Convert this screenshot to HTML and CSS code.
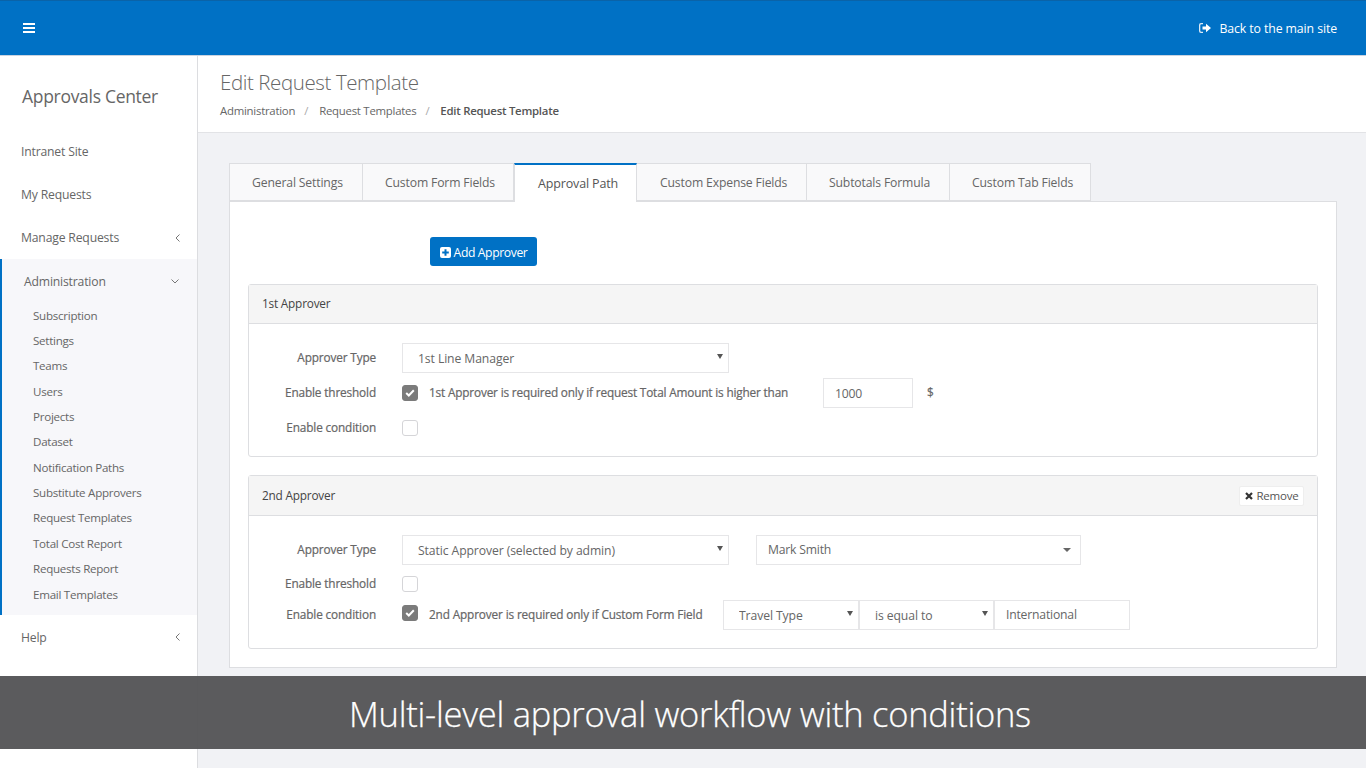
FILE: index.html
```html
<!DOCTYPE html>
<html lang="en">
<head>
<meta charset="utf-8">
<title>Edit Request Template</title>
<link rel="stylesheet" href="styles.css">
</head>
<body>
<header class="topbar">
  <svg class="burger" width="12" height="10" viewBox="0 0 12 10"><path d="M0 0h12v2H0zM0 4h12v2H0zM0 8h12v2H0z" fill="#fff"/></svg>
  <a class="back"><svg width="12" height="10" viewBox="0 0 12 10"><path d="M4 0H2a2 2 0 0 0-2 2v6a2 2 0 0 0 2 2h2V8.700H2.300A1 1 0 0 1 1.300 7.700V2.300a1 1 0 0 1 1-1H4z" fill="#dce9f5"/><path d="M3.500 3.500H7V.8L12 5 7 9.200V6.500H3.500z" fill="#fff"/></svg><span>Back to the main site</span></a>
</header>
<div class="layout">
  <aside class="sidebar">
    <div class="brand">Approvals Center</div>
    <nav>
      <div class="nav-item">Intranet Site</div>
      <div class="nav-item">My Requests</div>
      <div class="nav-item">Manage Requests<svg class="chev" width="5" height="8" viewBox="0 0 5 8"><path d="M4.500.5 1 4l3.500 3.500" fill="none" stroke="#777" stroke-width="1"/></svg></div>
      <div class="nav-group">
        <div class="nav-item group-head">Administration<svg class="chev down" width="8" height="5" viewBox="0 0 8 5"><path d="M.5.500 4 4 7.500.5" fill="none" stroke="#777" stroke-width="1"/></svg></div>
        <div class="sub">Subscription</div>
        <div class="sub">Settings</div>
        <div class="sub">Teams</div>
        <div class="sub">Users</div>
        <div class="sub">Projects</div>
        <div class="sub">Dataset</div>
        <div class="sub">Notification Paths</div>
        <div class="sub">Substitute Approvers</div>
        <div class="sub">Request Templates</div>
        <div class="sub">Total Cost Report</div>
        <div class="sub">Requests Report</div>
        <div class="sub">Email Templates</div>
      </div>
      <div class="nav-item">Help<svg class="chev" width="5" height="8" viewBox="0 0 5 8"><path d="M4.500.5 1 4l3.500 3.500" fill="none" stroke="#777" stroke-width="1"/></svg></div>
    </nav>
  </aside>
  <main class="main">
    <div class="page-head">
      <h1>Edit Request Template</h1>
      <div class="crumbs"><span>Administration</span><i>/</i><span>Request Templates</span><i>/</i><b>Edit Request Template</b></div>
    </div>
    <div class="content">
      <div class="tabs">
        <div class="tab t1">General Settings</div>
        <div class="tab t2">Custom Form Fields</div>
        <div class="tab t3 active">Approval Path</div>
        <div class="tab t4">Custom Expense Fields</div>
        <div class="tab t5">Subtotals Formula</div>
        <div class="tab t6">Custom Tab Fields</div>
      </div>
      <div class="pane">
        <div class="btn-row">
          <button class="btn-add"><svg width="11" height="11" viewBox="0 0 11 11"><path fill="#fff" fill-rule="evenodd" d="M2 0h7a2 2 0 0 1 2 2v7a2 2 0 0 1-2 2H2a2 2 0 0 1-2-2V2a2 2 0 0 1 2-2zM4.500 2.200v2.300H2.200v2h2.300v2.300h2V6.500h2.300v-2H6.500V2.200z"/></svg>Add Approver</button>
        </div>
        <section class="panel">
          <div class="panel-head"><span class="title">1st Approver</span></div>
          <div class="panel-body">
            <div class="row">
              <label>Approver Type</label>
              <div class="sel w327"><select><option>1st Line Manager</option></select></div>
            </div>
            <div class="row gap5">
              <label>Enable threshold</label>
              <span class="check on"><svg width="10" height="8" viewBox="0 0 10 8"><path d="M1.200 4 3.800 6.500 8.800 1.300" fill="none" stroke="#fff" stroke-width="2"/></svg></span>
              <span class="note n1">1st Approver is required only if request Total Amount is higher than</span>
              <input class="num" value="1000">
              <span class="dollar">$</span>
            </div>
            <div class="row gap5">
              <label>Enable condition</label>
              <span class="check"></span>
            </div>
          </div>
        </section>
        <section class="panel second">
          <div class="panel-head"><span class="title">2nd Approver</span><button class="btn-remove"><svg width="8" height="8" viewBox="0 0 8 8"><path d="M1 1l6 6M7 1 1 7" stroke="#333" stroke-width="2.200" fill="none"/></svg>Remove</button></div>
          <div class="panel-body">
            <div class="row">
              <label>Approver Type</label>
              <div class="sel w327"><select><option>Static Approver (selected by admin)</option></select></div>
              <div class="combo"><span class="combo-text">Mark Smith</span></div>
            </div>
            <div class="row gap4">
              <label>Enable threshold</label>
              <span class="check"></span>
            </div>
            <div class="row gap1 lifted">
              <label>Enable condition</label>
              <span class="check on"><svg width="10" height="8" viewBox="0 0 10 8"><path d="M1.200 4 3.800 6.500 8.800 1.300" fill="none" stroke="#fff" stroke-width="2"/></svg></span>
              <span class="note n2">2nd Approver is required only if Custom Form Field</span>
              <div class="sel w136"><select><option>Travel Type</option></select></div>
              <div class="sel w135"><select><option>is equal to</option></select></div>
              <input class="txt" value="International">
            </div>
          </div>
        </section>
      </div>
    </div>
  </main>
</div>
<div class="banner">Multi-level approval workflow with conditions</div>
</body>
</html>
```
FILE: styles.css
```css
* { box-sizing: border-box; }
html, body { margin: 0; height: 768px; overflow: hidden; }
body { font-family: "Open Sans", "Noto Sans", sans-serif; font-size: 12px; color: #666; background: #f1f2f5; position: relative; }
.topbar { height: 56px; background: #0071c5; border-top: 1px solid #0a63a8; border-bottom: 1px solid #c9d3e0; display: flex; align-items: center; justify-content: space-between; padding: 0 29px 0 23px; }
.burger { display: block; }
.back { color: #fff; display: flex; align-items: center; gap: 8px; font-size: 12.300px; letter-spacing: -.1px; }
.layout { display: flex; height: 712px; }
.sidebar { width: 198px; flex: none; background: #fff; border-right: 1px solid #dcdde0; }
.brand { font-size: 17.500px; letter-spacing: -.3px; color: #666; padding: 28px 0 0 22px; height: 73px; line-height: 24px; }
.nav-item { height: 43.400px; padding: 1px 17px 0 21px; display: flex; align-items: center; justify-content: space-between; font-size: 12.200px; letter-spacing: -.18px; color: #666; }
.nav-group { background: #f7f7fa; border-left: 2px solid #0071c5; height: 356px; }
.group-head { padding-left: 22px; padding-right: 18px; }
.sub { height: 25.360px; line-height: 25.360px; padding-left: 31px; font-size: 11.600px; letter-spacing: -.27px; color: #666; }
.main { flex: 1; min-width: 0; }
.page-head { height: 77px; background: #fff; border-bottom: 1px solid #e2e3e6; padding: 12px 0 0 22px; }
h1 { margin: 0; font-size: 20.500px; font-weight: 300; color: #666; line-height: 28px; letter-spacing: -.4px; }
.crumbs { display: flex; align-items: center; font-size: 11.400px; letter-spacing: -.25px; margin-top: 7px; line-height: 16px; color: #666; }
.crumbs i { font-style: normal; color: #aaa; margin: 0 11px 0 9px; }
.crumbs b { font-weight: 600; color: #555; }
.content { padding: 30px 29px 0 31px; }
.tabs { display: flex; height: 38px; position: relative; z-index: 1; }
.tab { height: 38px; background: #f9f9fa; border: 1px solid #dddee1; border-left: 0; display: flex; align-items: center; padding-left: 22px; font-size: 12.200px; letter-spacing: -.15px; color: #666; }
.t1 { width: 134px; border-left: 1px solid #dddee1; }
.t2 { width: 151px; }
.t3 { width: 123px; }
.t4 { width: 170px; padding-left: 23px; }
.t5 { width: 143px; }
.t6 { width: 141px; }
.tab.active { background: #fff; border-top: 2px solid #0071c5; border-left: 1px solid #dddee1; border-bottom: 0; height: 39px; color: #555; font-size: 12.500px; padding-left: 23px; }
.pane { height: 467px; background: #fff; border: 1px solid #dddee1; padding: 35px 18px 0; }
.btn-row { padding-left: 182px; height: 29px; }
.btn-add { height: 29px; width: 107px; background: #0071c5; color: #fff; border: 0; border-radius: 3px; font: inherit; font-size: 12.200px; letter-spacing: -.4px; display: flex; align-items: center; justify-content: center; gap: 3px; padding: 1px 0 0; }
.panel { border: 1px solid #dddee1; border-radius: 3px; margin-top: 18px; height: 173px; background: #fff; }
.panel.second { height: 174px; }
.panel-head { height: 39px; background: #f5f5f5; border-bottom: 1px solid #dddee1; display: flex; align-items: center; justify-content: space-between; padding: 0 13px; font-size: 11.800px; letter-spacing: -.2px; color: #444; }
.panel.second .panel-head { height: 40px; }
.title { margin-bottom: 2px; }
.btn-remove { height: 20px; width: 65px; background: #fff; border: 1px solid #eee; border-radius: 2px; color: #555; font: inherit; font-size: 11.500px; letter-spacing: -.2px; display: flex; align-items: center; justify-content: center; gap: 3px; padding: 0 0 0 1px; }
.panel-body { padding-top: 19px; }
.row { display: flex; align-items: center; height: 30px; }
.gap5 { margin-top: 5px; }
.gap4 { margin-top: 4px; }
.gap1 { margin-top: 1px; }
label { width: 127px; flex: none; text-align: right; font-size: 11.800px; letter-spacing: -.14px; -webkit-text-stroke: .2px #666; color: #666; margin: 0 26px 2px 0; }
.sel { position: relative; height: 30px; flex: none; }
.sel::after { content: ""; position: absolute; right: 6px; top: 11px; border: 3px solid transparent; border-top: 5px solid #555; border-bottom: 0; }
.sel select { appearance: none; width: 100%; height: 100%; background: #fff; border: 1px solid #e6e6e8; border-radius: 0; padding: 0 0 0 15px; font: inherit; font-size: 12.200px; letter-spacing: -.1px; color: #666; }
.w327 { width: 327px; }
.w136 { width: 136px; }
.w135 { width: 135px; }
.combo { width: 325px; height: 30px; margin-left: 27px; border: 1px solid #e6e6e8; display: flex; align-items: center; padding-left: 11px; font-size: 12.200px; letter-spacing: -.2px; color: #666; position: relative; flex: none; }
.combo-text { margin-bottom: 2px; }
.combo::after { content: ""; position: absolute; right: 9px; top: 12px; border: 4px solid transparent; border-top: 4px solid #666; border-bottom: 0; }
.check { width: 16px; height: 16px; border: 1px solid #d5d5d8; border-radius: 3px; background: #fff; display: flex; align-items: center; justify-content: center; flex: none; }
.check.on { background: #7b7b7b; border-color: #7b7b7b; }
.note { font-size: 11.800px; letter-spacing: -.17px; -webkit-text-stroke: .2px #666; color: #666; margin: 0 0 2px 11px; flex: none; }
.n1 { width: 394px; }
.n2 { width: 294px; letter-spacing: -.14px; }
.lifted .check { margin-bottom: 4px; }
.lifted label, .lifted .note { margin-bottom: 3px; }
input { font: inherit; font-size: 12.200px; letter-spacing: -.2px; color: #666; background: #fff; border: 1px solid #e6e6e8; height: 30px; border-radius: 0; outline: 0; }
.num { width: 90px; padding: 0 0 0 11px; flex: none; }
.dollar { margin: 0 0 2px 14px; -webkit-text-stroke: .2px #666; font-size: 11.800px; }
.txt { width: 136px; padding: 0 0 2px 11px; flex: none; }
.banner { position: absolute; left: 0; right: 0; top: 676px; height: 73px; background: rgba(86, 86, 88, .97); color: #fff; font-size: 34.500px; letter-spacing: -.25px; font-weight: 300; -webkit-text-stroke: .25px #fff; display: flex; align-items: center; justify-content: center; padding: 1px 0 0 14px; }
```
